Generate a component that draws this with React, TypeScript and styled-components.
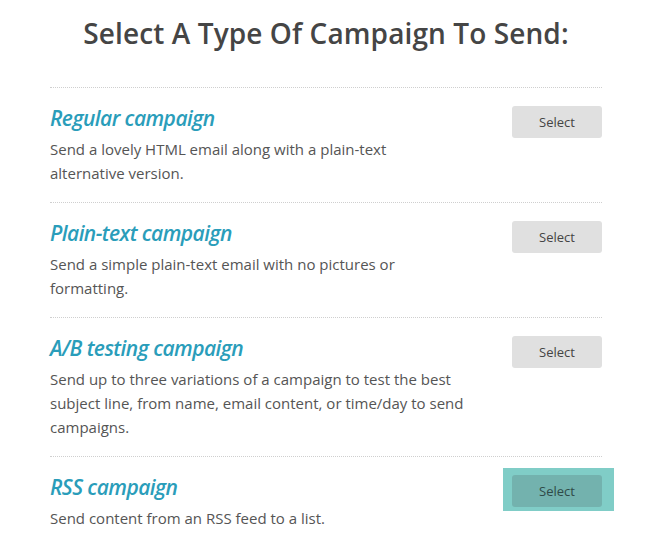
import React from "react";
import styled, { createGlobalStyle } from "styled-components";

const GlobalStyle = createGlobalStyle`
  html, body {
    margin: 0;
    padding: 0;
    background: #ffffff;
  }
  body {
    font-family: "Open Sans", "Liberation Sans", Arial, sans-serif;
    color: #555555;
  }
  * { box-sizing: border-box; }
`;

const Page = styled.div`
  width: 662px;
  padding: 13px 60px 0 50px;
`;

const Title = styled.h1`
  margin: 0 0 34px;
  font-size: 28px;
  line-height: 40px;
  font-weight: 600;
  letter-spacing: 0.1px;
  color: #454545;
  text-align: center;
`;

const List = styled.div`
  display: flex;
  flex-direction: column;
`;

const Row = styled.div`
  display: flex;
  justify-content: space-between;
  align-items: flex-start;
  border-top: 1px dotted #cfcfcf;
  padding: 18px 0 17px;
`;

const Info = styled.div`
  width: 420px;
`;

const Name = styled.h2`
  margin: 0 0 7px;
  font-size: 21px;
  line-height: 24px;
  font-weight: 600;
  font-style: italic;
  letter-spacing: -0.55px;
  color: #2a9dba;
`;

const Description = styled.p`
  margin: 0;
  font-size: 15px;
  line-height: 24px;
  color: #555555;
`;

const ButtonSpot = styled.div<{ $highlight?: boolean }>`
  position: relative;
  flex: none;
  ${(p) =>
    p.$highlight &&
    `
    &::before {
      content: "";
      position: absolute;
      top: -7px;
      left: -9px;
      right: -12px;
      bottom: -4px;
      background: #80cdc7;
    }
  `}
`;

const SelectButton = styled.button<{ $highlight?: boolean }>`
  position: relative;
  display: block;
  width: 90px;
  height: 32px;
  border: none;
  border-radius: 3px;
  background: ${(p) => (p.$highlight ? "#73b2ae" : "#e0e0e0")};
  color: ${(p) => (p.$highlight ? "#2f4a48" : "#444444")};
  font-family: "Open Sans", "Liberation Sans", Arial, sans-serif;
  font-size: 13px;
  font-weight: 400;
  cursor: pointer;
  padding: 0;
`;

type Campaign = {
  name: string;
  lines: string[];
  highlight?: boolean;
};

const campaigns: Campaign[] = [
  {
    name: "Regular campaign",
    lines: ["Send a lovely HTML email along with a plain-text", "alternative version."],
  },
  {
    name: "Plain-text campaign",
    lines: ["Send a simple plain-text email with no pictures or", "formatting."],
  },
  {
    name: "A/B testing campaign",
    lines: [
      "Send up to three variations of a campaign to test the best",
      "subject line, from name, email content, or time/day to send",
      "campaigns.",
    ],
  },
  {
    name: "RSS campaign",
    lines: ["Send content from an RSS feed to a list."],
    highlight: true,
  },
];

export default function App() {
  return (
    <>
      <GlobalStyle />
      <Page>
        <Title>Select A Type Of Campaign To Send:</Title>
        <List>
          {campaigns.map((c) => (
            <Row key={c.name}>
              <Info>
                <Name>{c.name}</Name>
                <Description>
                  {c.lines.map((l, i) => (
                    <React.Fragment key={i}>
                      {i > 0 && <br />}
                      {l}
                    </React.Fragment>
                  ))}
                </Description>
              </Info>
              <ButtonSpot $highlight={c.highlight}>
                <SelectButton $highlight={c.highlight}>Select</SelectButton>
              </ButtonSpot>
            </Row>
          ))}
        </List>
      </Page>
    </>
  );
}
